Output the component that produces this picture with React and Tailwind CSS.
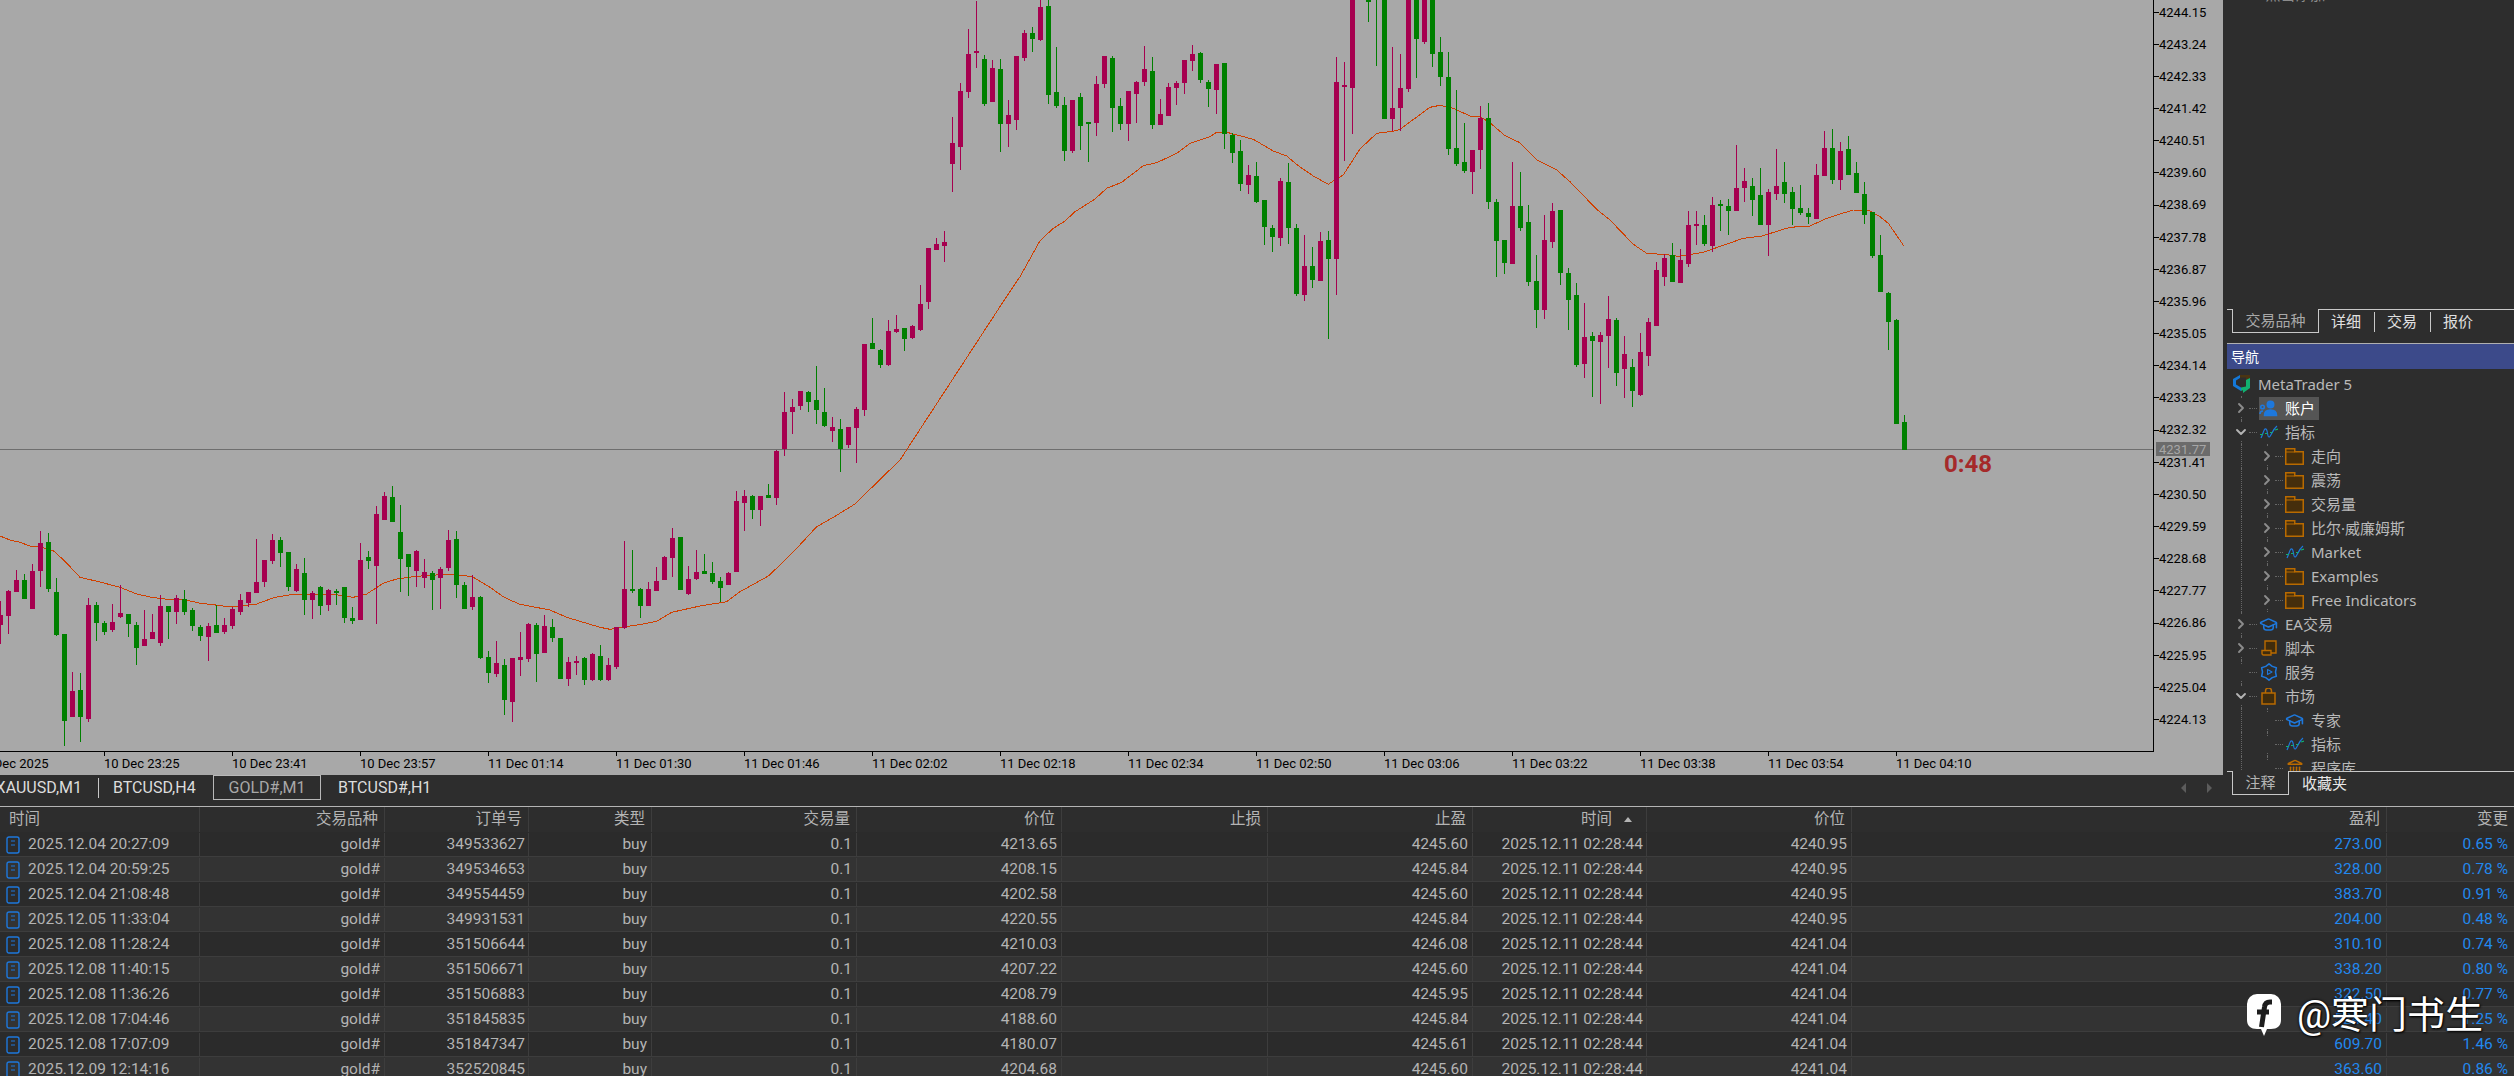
import { ChevronRight, ChevronDown, GraduationCap, Landmark } from "lucide-react";

/* ---------------------------------------------
   Candles, read off crops of the chart.
   Each line: colour high bodyTop bodyBottom low, in crop pixels.
   y0 / k turn them back into chart pixels.
--------------------------------------------- */
const CANDLE_BLOCKS = [
  {
    y0: 480,
    k: 3,
    rows: `p 363 405 435 492|p 330 333 408 462|p 270 300 336 336|g 282 300 357 357|p 252 273 387 387|p 153 189 273 321|g 159 186 327 336|g 294 336 465 468
g 462 462 723 798|p 576 633 711 711|g 579 630 711 786|p 354 375 717 726|g 366 375 429 483|g 423 429 456 465|p 372 426 450 456|p 315 399 411 414
g 402 402 432 471|g 426 435 504 555|p 390 477 498 498|p 402 456 477 477|p 345 378 489 498|g 378 378 396 477|p 345 354 396 432|g 330 357 396 405
g 384 390 438 453|g 435 441 468 483|p 429 438 471 543|g 375 435 459 459|p 414 435 456 462|p 381 387 438 447|p 342 360 396 405|p 336 336 369 381
p 177 306 339 339|p 240 240 306 321|p 162 180 243 252|g 171 180 219 261|g 216 216 321 333|p 252 267 333 336|g 234 279 360 405|p 333 339 360 417
g 318 321 378 405|p 327 330 375 393|g 327 333 339 375|g 321 321 414 429|g 381 414 423 432|p 189 240 420 420|g 213 231 243 267|p 78 102 258 432
p 36 48 120 120|g 18 51 126 126|g 75 156 237 336|g 222 222 261 348|p 210 213 273 321|p 237 276 294 324|g 273 279 300 390|p 261 267 294 387
p 150 180 264 273|g 153 177 315 354|g 306 315 387 387|p 285 351 381 390|g 348 351 534 537|g 513 531 579 609|p 483 549 582 591|g 537 555 660 705`,
  },
  {
    y0: 440,
    k: 3,
    rows: `p 654 654 786 846|p 576 651 660 708|p 549 552 657 666|g 549 555 642 726|p 525 558 639 639|g 537 561 594 606|g 594 594 717 717|p 651 666 717 738
p 648 663 669 705|g 651 654 720 735|p 639 642 720 723|g 615 648 720 723|p 654 675 720 723|p 561 561 681 687|p 303 447 564 567|g 330 447 453 459
g 444 447 498 534|p 426 447 498 498|p 381 423 453 453|p 348 351 420 420|p 264 294 354 411|g 291 291 450 450|p 378 417 462 465|p 330 396 417 420
g 342 393 402 402|g 366 399 426 432|g 411 423 444 486|p 396 399 435 435|p 153 183 396 396|p 150 168 189 273|g 165 168 210 237|p 168 168 210 258
g 132 165 174 174|p 30 33 174 195`,
  },
  {
    y0: 0,
    k: 2.063,
    rows: `p 808 849 926 940|p 824 840 850 896|p 806 806 838 845|g 806 809 829 850|g 755 826 846 875|g 800 849 879 880|p 860 881 889 912|g 865 885 927 973
p 880 881 919 925|p 840 843 883 955|p 710 710 846 858|g 656 708 720 720|g 720 722 753 760|p 660 682 753 755|p 650 679 684 688|g 676 677 700 724
p 670 672 698 700|p 588 627 681 683|p 512 512 623 638|p 490 503 516 516|p 477 499 508 541`,
  },
  {
    y0: 0,
    k: 3,
    rows: `p 351 429 492 576|p 249 273 441 510|p 87 162 276 294|p 3 153 159 204|g 165 177 312 318|p 180 204 306 306|g 177 207 372 456|p 300 345 372 441
p 168 168 360 390|p 90 99 174 183|g 81 99 117 156|p -9 21 120 123|g -9 18 285 312|g 141 276 318 324|g 291 315 453 483|p 300 300 453 459
g 279 291 378 450|g 366 366 372 486|p 228 252 369 408|p 168 168 252 264|g 168 174 324 396|g 294 318 372 390|p 273 273 372 423|p 243 246 282 369
p 138 207 246 258|g 171 213 375 387|p 297 342 375 375|p 250 261 348 348|p 243 249 264 315|p 180 180 249 282|p 135 162 183 213|g 156 159 240 249
g 240 246 267 321|p 192 192 270 342|g 189 189 402 447|g 399 405 459 489|g 420 453 552 573|p 495 525 555 582|g 486 528 606 609|g 600 600 681 735
g 675 684 711 756|p 534 543 714 738|g 489 546 684 732|g 672 684 882 888|p 705 798 885 902|g 741 798 840 864|p 696 723 843 843|g 693 720 777 1017
p 171 246 777 885|p 186 255 261 483|p -9 -9 264 402|g -30 -30 -20 -10|g -9 -9 6 66|g -30 -30 -20 198|g -9 -9 357 357|p 141 324 357 393
p 162 264 324 393|p -9 -9 267 276|g -9 -9 117 234|p -9 -9 126 132|g -9 -9 162 201|g 111 156 231 258|g 156 231 447 465|g 270 444 492 498
g 369 486 513 519|p 450 450 516 582|p 318 354 450 507|g 309 354 606 627|g 597 606 723 831|g 720 720 789 822|p 486 618 792 792|g 516 618 684 693
g 615 666 846 858|g 765 843 930 984|p 645 720 930 957|p 609 633 726 744|g 630 630 819 855`,
  },
  {
    y0: 130,
    k: 3,
    rows: `g 414 429 510 600|g 459 495 705 711|p 519 621 702 744|g 606 618 633 801|p 606 615 636 822|p 498 567 618 714|g 564 570 729 768|p 618 672 717 804
g 687 711 783 831|p 609 666 795 798|p 564 576 678 708|p 396 420 588 588|p 372 384 441 468|g 339 375 456 456|p 357 390 459 459|p 243 285 402 411
p 243 282 288 345|g 255 285 342 348|p 201 225 348 366|g 210 222 228 303|g 207 228 243 315|p 45 174 243 243|p 114 153 174 216|g 144 168 210 258
g 114 195 285 285|p 177 186 285 378|p 57 168 192 210|g 96 156 192 219|g 171 186 237 285|g 165 234 249 255|g 234 249 261 282|p 102 135 267 267
p 3 54 138 138|g -3 54 150 162|p 36 63 150 180|g 18 57 135 135|g 96 129 189 189|g 156 192 255 282|g 246 246 378 384|g 315 375 486 486
g 486 489 576 660|g 567 570 882 882|g 855 876 960 960`,
  },
];

const candles = CANDLE_BLOCKS.flatMap(({ y0, k, rows }) =>
  rows
    .split(/[|\n]/)
    .map(row => row.trim().split(" "))
    .map(([colour, ...nums]) => {
      const [high, top, bottom, low] = nums.map(n => Math.round(y0 + Number(n) / k));
      return { colour, high, top, bottom, low };
    })
);

/* moving average, same idea: x0, y0 of the crop, then x,y pairs at 3x */
const MA_BLOCKS = [
  [0, 480, "0,168 30,180 60,187 95,200 110,198 160,212 185,235 210,260 240,292 300,306 360,322 410,342 450,351 500,358 550,358 600,370 640,374 690,381 770,372 825,352 880,343 1000,343 1060,352 1100,342 1150,310 1190,297 1250,289 1340,283 1390,286 1420,292 1470,322 1510,350"],
  [500, 440, "30,480 60,493 150,510 200,532 300,562 330,568 370,561 430,552 470,544 515,517 600,498 680,485 720,455 805,408 840,375 890,325 950,260 1000,232 1065,192 1130,128 1200,60"],
  [920, 0, "255,897 300,830 360,722 400,685 435,663 465,635 525,597 560,565 605,547 670,497 710,488 770,460 810,430 870,410 890,397 925,398 1000,418 1060,453 1100,468 1135,497 1180,528 1225,553 1240,543 1270,525 1320,447"],
  [1330, 0, "140,400 190,394 210,388 300,322 330,316 370,325 420,348 450,350 480,368 525,407 570,428 620,480 680,510 720,545 800,628 840,660 910,733 950,760 1010,764 1045,769 1120,757 1240,715 1295,708 1380,682 1440,678 1490,655"],
  [1560, 130, "840,252 880,240 930,243 960,260 985,280 1031,347"],
];

const maPoints = MA_BLOCKS.flatMap(([x0, y0, pts]) =>
  pts.split(" ").map(pair => {
    const [x, y] = pair.split(",").map(Number);
    return `${(x0 + x / 3).toFixed(1)},${(y0 + y / 3).toFixed(1)}`;
  })
).join(" ");

const PRICES = [
  "4244.15", "4243.24", "4242.33", "4241.42", "4240.51", "4239.60", "4238.69", "4237.78",
  "4236.87", "4235.96", "4235.05", "4234.14", "4233.23", "4232.32", "4231.41", "4230.50",
  "4229.59", "4228.68", "4227.77", "4226.86", "4225.95", "4225.04", "4224.13",
];

const TIMES = [
  "10 Dec 2025", "10 Dec 23:25", "10 Dec 23:41", "10 Dec 23:57", "11 Dec 01:14", "11 Dec 01:30",
  "11 Dec 01:46", "11 Dec 02:02", "11 Dec 02:18", "11 Dec 02:34", "11 Dec 02:50", "11 Dec 03:06",
  "11 Dec 03:22", "11 Dec 03:38", "11 Dec 03:54", "11 Dec 04:10",
];

const POSITIONS = [
  ["2025.12.04 20:27:09", "349533627", "4213.65", "4245.60", "4240.95", "273.00", "0.65 %"],
  ["2025.12.04 20:59:25", "349534653", "4208.15", "4245.84", "4240.95", "328.00", "0.78 %"],
  ["2025.12.04 21:08:48", "349554459", "4202.58", "4245.60", "4240.95", "383.70", "0.91 %"],
  ["2025.12.05 11:33:04", "349931531", "4220.55", "4245.84", "4240.95", "204.00", "0.48 %"],
  ["2025.12.08 11:28:24", "351506644", "4210.03", "4246.08", "4241.04", "310.10", "0.74 %"],
  ["2025.12.08 11:40:15", "351506671", "4207.22", "4245.60", "4241.04", "338.20", "0.80 %"],
  ["2025.12.08 11:36:26", "351506883", "4208.79", "4245.95", "4241.04", "322.50", "0.77 %"],
  ["2025.12.08 17:04:46", "351845835", "4188.60", "4245.84", "4241.04", "524.40", "1.25 %"],
  ["2025.12.08 17:07:09", "351847347", "4180.07", "4245.61", "4241.04", "609.70", "1.46 %"],
  ["2025.12.09 12:14:16", "352520845", "4204.68", "4245.60", "4241.04", "363.60", "0.86 %"],
];

const GRID = "grid grid-cols-[200px_185px_144px_123px_205px_205px_206px_205px_174px_205px_535px_127px]";
const CELL = "border-r border-[#3d3d3d] truncate flex items-center justify-end";

const Chart = () => (
  <svg width="2223" height="775" className="block bg-[#a8a8a8]">
    <line x1="0" y1="449.5" x2="2153" y2="449.5" stroke="#6e6e6e" />
    <polyline points={maPoints} fill="none" stroke="#d04000" strokeWidth="1" shapeRendering="crispEdges" />
    <g shapeRendering="crispEdges">
      {candles.map((c, i) => {
        const fill = c.colour === "p" ? "#a6004f" : "#008000";
        return (
          <g key={i} fill={fill}>
            <rect x={8 * i} y={c.high} width="1" height={Math.max(c.low - c.high, 0)} />
            <rect x={8 * i - 2} y={c.top} width="5" height={Math.max(c.bottom - c.top, 2)} />
          </g>
        );
      })}
      <rect x="0" y="751" width="2154" height="1" fill="#000" />
      <rect x="2153" y="0" width="1" height="752" fill="#000" />
      {PRICES.map((p, i) => (
        <rect key={p} x="2154" y={Math.round(11.7 + 32.15 * i)} width="5" height="1" fill="#000" />
      ))}
      {TIMES.map((t, i) => (
        <rect key={t} x={128 * i - 24} y="752" width="1" height="4" fill="#000" />
      ))}
      <rect x="2156" y="442" width="54" height="14" fill="#6b6b6b" />
    </g>
    <g className="text-[13px]" fill="#000">
      {PRICES.map((p, i) => (
        <text key={p} x="2159" y={Math.round(16.5 + 32.15 * i)}>{p}</text>
      ))}
      {TIMES.map((t, i) => (
        <text key={t} x={128 * i - 24} y="768">{t}</text>
      ))}
    </g>
    <text x="2159" y="454" className="text-[13px]" fill="#a6a6a6">4231.77</text>
    <text x="1944" y="472" className="text-[24px] font-bold" fill="#a52a2a">0:48</text>
  </svg>
);

const ChartTabs = () => (
  <div className="flex h-[31px] items-start text-[16px] text-[#dcdcdc]">
    <span className="flex h-[25px] w-[99px] shrink-0 items-center">
      <span className="flex h-[20px] w-full items-center justify-end border-r border-[#c8c8c8] pr-[16px] whitespace-nowrap">XAUUSD,M1</span>
    </span>
    <span className="flex h-[25px] w-[114px] items-center pl-[14px]">BTCUSD,H4</span>
    <span className="flex h-[25px] w-[108px] items-center justify-center border border-[#b8b8b8] text-[#a8a8a8]">GOLD#,M1</span>
    <span className="flex h-[25px] items-center pl-[17px]">BTCUSD#,H1</span>
    <span className="ml-auto mr-[14px] flex h-[25px] items-center gap-[17px] text-[#5c5c5c]">
      <svg width="8" height="10"><path d="M6 0v10L1 5z" fill="currentColor" /></svg>
      <svg width="8" height="10"><path d="M2 0v10l5-5z" fill="currentColor" /></svg>
    </span>
  </div>
);

/* ---------------------------------------------
   Navigator icons
--------------------------------------------- */
const MtLogo = () => (
  <svg width="19" height="20" viewBox="0 0 19 20">
    <path d="M1 5l7-4v3L4 6.5v4l5 3V17L1 12z" fill="#1478d8" />
    <path d="M8 1h10v3l-4 2V3.5H8z" fill="#4a3412" />
    <path d="M14 6l4-2v10l-7 5v-4l3-2z" fill="#12b070" />
    <path d="M9 13.5l5-1V15l-5 2z" fill="#12b070" />
  </svg>
);

const UsersIcon = () => (
  <svg width="19" height="17" viewBox="0 0 19 17" fill="none" stroke="#1e78dc" strokeWidth="1.6">
    <circle cx="11.5" cy="4.5" r="3.2" fill="#1e78dc" />
    <path d="M5.5 15.5c0-4 2.5-5.5 6-5.5s6 1.5 6 5.5z" fill="#1e78dc" />
    <circle cx="3.5" cy="7" r="1.8" />
    <path d="M1 14c0-2 1-3 3-3" />
  </svg>
);

const IndicatorIcon = () => (
  <svg width="18" height="14" viewBox="0 0 18 14" fill="none">
    <path d="M1 13c2-4 3-10 5-9s1 8 3 8 3-7 8-11" stroke="#1e78dc" strokeWidth="1.2" />
    <path d="M0 9.5h3M5 8.5h2.5M10 7.5h2.5M15 5l3-1" stroke="#12b070" strokeWidth="1.2" />
  </svg>
);

const FolderIcon = () => (
  <svg width="19" height="17" viewBox="0 0 19 17">
    <path d="M.75 .75h9v3h8.5v12.5H.75z" fill="#452e0c" stroke="#b86a00" strokeWidth="1.5" />
    <path d="M.75 4h9" stroke="#b86a00" strokeWidth="1" />
  </svg>
);

const ScriptIcon = () => (
  <svg width="16" height="16" viewBox="0 0 16 16" fill="#402c0c" stroke="#b86a00" strokeWidth="1.4">
    <path d="M4 1h11v12H4z" />
    <path d="M1 10.5h9V15H2.5A1.5 1.5 0 0 1 1 13.5z" />
  </svg>
);

const ServiceIcon = () => (
  <svg width="18" height="18" viewBox="0 0 18 18" fill="none" stroke="#1e78dc" strokeWidth="1.5" strokeLinejoin="round">
    <polygon points="9,0.8 12.25,3.37 16.36,4.75 15.5,9 16.36,13.25 12.25,14.63 9,17.2 5.75,14.63 1.64,13.25 2.5,9 1.64,4.75 5.75,3.37" />
    <path d="M7.5 6.5L12 9l-4.5 2.5z" strokeWidth="1.1" />
  </svg>
);

const BagIcon = () => (
  <svg width="15" height="17" viewBox="0 0 15 17" fill="none" stroke="#b86a00" strokeWidth="1.5">
    <path d="M1 5h13v11H1z" fill="#402c0c" />
    <path d="M4.5 5V3a3 3 0 0 1 6 0v2" />
  </svg>
);

const CapIcon = () => <GraduationCap size={19} color="#1e78dc" strokeWidth={2} />;
const BankIcon = () => <Landmark size={18} color="#b86a00" strokeWidth={2} />;

const TREE = [
  { label: "账户", depth: 0, icon: <UsersIcon />, arrow: "right", selected: true },
  { label: "指标", depth: 0, icon: <IndicatorIcon />, arrow: "down" },
  { label: "走向", depth: 1, icon: <FolderIcon />, arrow: "right" },
  { label: "震荡", depth: 1, icon: <FolderIcon />, arrow: "right" },
  { label: "交易量", depth: 1, icon: <FolderIcon />, arrow: "right" },
  { label: "比尔·威廉姆斯", depth: 1, icon: <FolderIcon />, arrow: "right" },
  { label: "Market", depth: 1, icon: <IndicatorIcon />, arrow: "right" },
  { label: "Examples", depth: 1, icon: <FolderIcon />, arrow: "right" },
  { label: "Free Indicators", depth: 1, icon: <FolderIcon />, arrow: "right" },
  { label: "EA交易", depth: 0, icon: <CapIcon />, arrow: "right" },
  { label: "脚本", depth: 0, icon: <ScriptIcon />, arrow: "right" },
  { label: "服务", depth: 0, icon: <ServiceIcon /> },
  { label: "市场", depth: 0, icon: <BagIcon />, arrow: "down" },
  { label: "专家", depth: 1, icon: <CapIcon /> },
  { label: "指标", depth: 1, icon: <IndicatorIcon /> },
  { label: "程序库", depth: 1, icon: <BankIcon /> },
];

const TreeRow = ({ row }) => (
  <div className={`relative flex h-6 items-center ${row.depth === 1 ? "pl-[32px]" : "pl-[6px]"}`}>
    <span className="absolute inset-y-0 left-[14px] border-l border-dotted border-[#666]" />
    {row.depth === 1 && <span className="absolute inset-y-0 left-[40px] border-l border-dotted border-[#666]" />}
    <span className="relative z-10 flex w-4 shrink-0 justify-center bg-[#2d2d2d] text-[#8c8c8c]">
      {row.arrow === "right" && <ChevronRight size={18} strokeWidth={2.8} />}
      {row.arrow === "down" && <ChevronDown size={18} strokeWidth={2.8} className="text-[#b4b4b4]" />}
      {!row.arrow && <span className="h-4" />}
    </span>
    <span className="mr-[2px] w-2 shrink-0 border-t border-dotted border-[#666]" />
    <span className={`relative flex h-[23px] items-center gap-[7px] ${row.selected ? "bg-[#555] text-white" : ""}`}>
      <span className="flex w-[19px] shrink-0 justify-center">{row.icon}</span>
      <span className="pr-[4px]">{row.label}</span>
    </span>
  </div>
);

const RightPanel = () => (
  <div className="flex w-[287px] shrink-0 flex-col font-[family-name:'Noto_Sans','Noto_Sans_CJK_SC',sans-serif] text-[15px] text-[#b9b9b9]">
    {/* market watch, scrolled so only the foot of one row shows */}
    <div className="h-[309px] overflow-hidden">
      <div className="mt-[-16px] flex h-5 items-center pl-[22px] text-[#8c8c8c]">
        <span className="mr-[8px] text-[#12b070]">+</span>点击添加...
        <span className="ml-auto pr-[4px]">2 / 25</span>
      </div>
    </div>

    <div className="flex h-6 text-[#e0e0e0]">
      <span className="w-[5px] border-t border-[#c8c8c8]" />
      <span className="flex w-[87px] items-center justify-center border-x border-b border-[#c8c8c8] text-[#a8a8a8]">交易品种</span>
      <div className="flex flex-1 items-center border-t border-[#c8c8c8] pl-[12px]">
        <span className="flex h-5 w-[44px] items-center border-r border-[#c8c8c8]">详细</span>
        <span className="flex h-5 w-[56px] items-center border-r border-[#c8c8c8] pl-[12px]">交易</span>
        <span className="pl-[12px]">报价</span>
      </div>
    </div>

    <div className="h-[10px]" />
    <div className="flex h-[26px] items-center border-t border-[#b0b0b0] bg-[#3c4a8a] pl-1 text-[14px] text-white">导航</div>

    <div className="h-[402px] overflow-hidden pt-[3px]">
      <div className="flex h-6 items-center gap-[7px] pl-[5px]">
        <MtLogo />
        MetaTrader 5
      </div>
      {TREE.map((row, i) => (
        <TreeRow key={i} row={row} />
      ))}
    </div>

    <div className="flex h-6 text-[#e8e8e8]">
      <span className="w-[5px] border-t border-[#c8c8c8]" />
      <span className="flex w-[57px] items-center justify-center border-x border-b border-[#c8c8c8] text-[#b4b4b4]">注释</span>
      <div className="flex flex-1 items-center border-t border-[#c8c8c8] pl-[13px]">收藏夹</div>
    </div>
  </div>
);

const OrderIcon = () => (
  <svg width="14" height="18" viewBox="0 0 14 18" fill="none" stroke="#1e78dc" strokeWidth="1.4" className="mx-[6px] shrink-0">
    <rect x="1" y="1" width="12" height="16" rx="2" />
    <path d="M5 5h4M5 9h4" strokeWidth="1" />
  </svg>
);

const Table = () => (
  <div className="flex-1 overflow-hidden border-t border-[#b4b4b4] text-[15.5px] text-[#b4b4b4]">
    <div className={`${GRID} h-[25px] bg-[#2d2d2d]`}>
      <div className={`${CELL} justify-start! pl-[9px]`}>时间</div>
      <div className={`${CELL} pr-[6px]`}>交易品种</div>
      <div className={`${CELL} pr-[6px]`}>订单号</div>
      <div className={`${CELL} pr-[6px]`}>类型</div>
      <div className={`${CELL} pr-[6px]`}>交易量</div>
      <div className={`${CELL} pr-[6px]`}>价位</div>
      <div className={`${CELL} pr-[6px]`}>止损</div>
      <div className={`${CELL} pr-[6px]`}>止盈</div>
      <div className={`${CELL} pr-[14px] gap-[12px]`}>
        时间
        <svg width="8" height="5"><path d="M0 5l4-5 4 5z" fill="#b4b4b4" /></svg>
      </div>
      <div className={`${CELL} pr-[6px]`}>价位</div>
      <div className={`${CELL} pr-[6px]`}>盈利</div>
      <div className={`${CELL} border-r-0 pr-[6px]`}>变更</div>
    </div>
    {POSITIONS.map((p, i) => (
      <div key={p[1]} className={`${GRID} h-[25px] border-b border-[#3d3d3d] pt-px ${i % 2 ? "bg-[#333333]" : "bg-[#2b2b2b]"}`}>
        <div className={`${CELL} justify-start!`}>
          <OrderIcon />
          <span className="ml-[2px]">{p[0]}</span>
        </div>
        <div className={`${CELL} pr-[4px]`}>gold#</div>
        <div className={`${CELL} pr-[3px]`}>{p[1]}</div>
        <div className={`${CELL} pr-[4px]`}>buy</div>
        <div className={`${CELL} pr-[4px]`}>0.1</div>
        <div className={`${CELL} pr-[4px]`}>{p[2]}</div>
        <div className={CELL} />
        <div className={`${CELL} pr-[4px]`}>{p[3]}</div>
        <div className={`${CELL} pr-[3px]`}>2025.12.11 02:28:44</div>
        <div className={`${CELL} pr-[4px]`}>{p[4]}</div>
        <div className={`${CELL} pr-[4px] text-[#2288ee]`}>{p[5]}</div>
        <div className={`${CELL} border-r-0 pr-[6px] text-[#2288ee]`}>{p[6]}</div>
      </div>
    ))}
  </div>
);

const Watermark = () => (
  <div className="absolute left-[2246px] top-[993px] flex items-center gap-[15px] text-[38px] leading-none text-white [text-shadow:0_0_3px_#000,1px_1px_2px_#000]">
    <svg width="36" height="44" viewBox="0 0 36 44">
      <path d="M11 1h14a10 10 0 0 1 10 10v16c0 6-4 9-10 9h-4l-3 7-3-7h-4C5 36 1 33 1 27V11A10 10 0 0 1 11 1z" fill="#fff" />
      <path d="M26 9h-2c-3 0-5 1-5.5 5l-3 20M11 19h12" fill="none" stroke="#1d1d1d" strokeWidth="5" />
    </svg>
    <span>@寒门书生</span>
  </div>
);

export default function App() {
  return (
    <div className="relative flex h-[1076px] w-[2514px] flex-col overflow-hidden bg-[#2d2d2d] font-[family-name:Roboto,'Noto_Sans_CJK_SC',sans-serif]">
      <div className="flex h-[806px] shrink-0">
        <div className="w-[2227px] shrink-0">
          <Chart />
          <ChartTabs />
        </div>
        <RightPanel />
      </div>
      <Table />
      <Watermark />
    </div>
  );
}
